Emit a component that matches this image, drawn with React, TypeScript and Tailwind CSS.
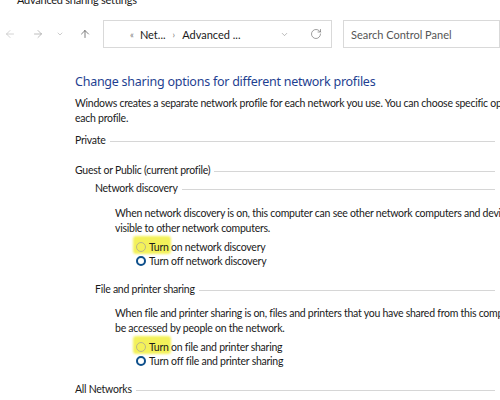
import { ArrowLeft, ArrowRight, ArrowUp, ChevronDown, RotateCw } from "lucide-react";

const font = { fontFamily: 'Lato, "Noto Sans", sans-serif' };
const headFont = { fontFamily: '"Noto Sans", "Open Sans", sans-serif' };

function Heading({ label, indent }: { label: string; indent: string }) {
  return (
    <div className={`flex h-[16px] items-center gap-[4px] ${indent}`}>
      <span className="whitespace-nowrap">{label}</span>
      <div className="mt-[2px] h-px flex-1 bg-[#d6d6d6]" />
    </div>
  );
}

function Radio({ checked, label, highlight }: { checked?: boolean; label: string; highlight?: boolean }) {
  return (
    <div className="relative flex h-[14px] items-center pl-[21px]">
      {highlight ? (
        <div className="absolute left-[18px] top-[-4px] h-[18px] w-[38px] rounded-[3px] bg-[#f3f15a] blur-[1px]" />
      ) : null}
      <span
        className={
          checked
            ? "relative h-[10px] w-[10px] shrink-0 rounded-full border-[2.5px] border-[#0d4f8b] bg-white"
            : "relative h-[10px] w-[10px] shrink-0 rounded-full border border-[#b9b58a]"
        }
      />
      <span className="relative ml-[3px] whitespace-nowrap">{label}</span>
    </div>
  );
}

export default function App() {
  return (
    <div
      className="h-[400px] w-[500px] overflow-hidden bg-white text-[10.5px] leading-[15px] tracking-[-0.25px] text-[#1a1a1a]"
      style={font}
    >
      <div className="mt-[-8px] h-[16px] pl-[17px] text-[11px] leading-[16px]">Advanced sharing settings</div>

      <div className="mt-[12px] flex h-[28px] items-center">
        <div className="flex w-[103px] items-center">
          <ArrowLeft className="ml-[4px] h-[12px] w-[12px] text-[#bcbcbc]" strokeWidth={1.3} />
          <ArrowRight className="ml-[16px] h-[12px] w-[12px] text-[#9a9a9a]" strokeWidth={1.3} />
          <ChevronDown className="ml-[12px] h-[8px] w-[8px] text-[#9a9a9a]" strokeWidth={1.5} />
          <ArrowUp className="ml-[15px] h-[12px] w-[12px] text-[#555]" strokeWidth={1.5} />
        </div>
        <div className="flex h-[28px] w-[229px] items-center whitespace-nowrap border border-[#d9d9d9] pl-[26px] text-[11px] tracking-normal">
          <span className="text-[9px] text-[#777]">«</span>
          <span className="ml-[6px]">Net...</span>
          <span className="ml-[7px] text-[9px] text-[#777]">›</span>
          <span className="ml-[7px]">Advanced ...</span>
          <div className="flex-1" />
          <ChevronDown className="h-[9px] w-[9px] text-[#888]" strokeWidth={1.5} />
          <RotateCw className="ml-[21px] mr-[9px] h-[12px] w-[12px] text-[#777]" strokeWidth={1.4} />
        </div>
        <div className="ml-[11px] flex h-[28px] flex-1 items-center whitespace-nowrap border border-[#d9d9d9] pl-[7px] text-[11px] tracking-normal text-[#555]">
          Search Control Panel
        </div>
      </div>

      <div className="pl-[75px] pr-[5px]">
        <div
          className="mt-[24px] h-[20px] whitespace-nowrap text-[12.5px] leading-[20px] tracking-[-0.25px] text-[#1f3f91]"
          style={headFont}
        >
          Change sharing options for different network profiles
        </div>
        <div className="mt-[4px] whitespace-nowrap">
          Windows creates a separate network profile for each network you use. You can choose specific options for
          <br />
          each profile.
        </div>

        <div className="mt-[6px]">
          <Heading label="Private" indent="" />
        </div>
        <div className="mt-[14px]">
          <Heading label="Guest or Public (current profile)" indent="" />
        </div>
        <div className="mt-[2px]">
          <Heading label="Network discovery" indent="pl-[20px]" />
        </div>

        <div className="mt-[10px] whitespace-nowrap pl-[40px]">
          When network discovery is on, this computer can see other network computers and devices and is
          <br />
          visible to other network computers.
        </div>
        <div className="mt-[4px] pl-[40px]">
          <Radio label="Turn on network discovery" highlight />
          <Radio label="Turn off network discovery" checked />
        </div>

        <div className="mt-[13px]">
          <Heading label="File and printer sharing" indent="pl-[20px]" />
        </div>
        <div className="mt-[9px] whitespace-nowrap pl-[40px]">
          When file and printer sharing is on, files and printers that you have shared from this computer can
          <br />
          be accessed by people on the network.
        </div>
        <div className="mt-[4px] pl-[40px]">
          <Radio label="Turn on file and printer sharing" highlight />
          <Radio label="Turn off file and printer sharing" checked />
        </div>

        <div className="mt-[13px]">
          <Heading label="All Networks" indent="" />
        </div>
      </div>
    </div>
  );
}
